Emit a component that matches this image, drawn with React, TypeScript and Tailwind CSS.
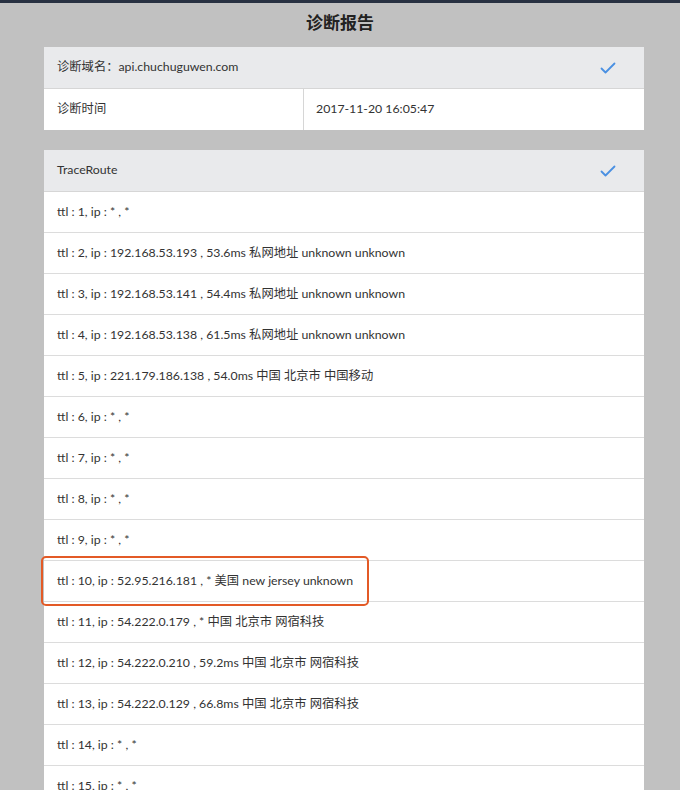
import React from 'react';

const rows = [
  'ttl : 1, ip : * , *',
  'ttl : 2, ip : 192.168.53.193 , 53.6ms 私网地址 unknown unknown',
  'ttl : 3, ip : 192.168.53.141 , 54.4ms 私网地址 unknown unknown',
  'ttl : 4, ip : 192.168.53.138 , 61.5ms 私网地址 unknown unknown',
  'ttl : 5, ip : 221.179.186.138 , 54.0ms 中国 北京市 中国移动',
  'ttl : 6, ip : * , *',
  'ttl : 7, ip : * , *',
  'ttl : 8, ip : * , *',
  'ttl : 9, ip : * , *',
  'ttl : 10, ip : 52.95.216.181 , * 美国 new jersey unknown',
  'ttl : 11, ip : 54.222.0.179 , * 中国 北京市 网宿科技',
  'ttl : 12, ip : 54.222.0.210 , 59.2ms 中国 北京市 网宿科技',
  'ttl : 13, ip : 54.222.0.129 , 66.8ms 中国 北京市 网宿科技',
  'ttl : 14, ip : * , *',
  'ttl : 15, ip : * , *',
];

function Check() {
  return (
    <svg width="16" height="12" viewBox="0 0 16 12" fill="none">
      <path d="M1.5 6.5 L5.5 10.5 L14.5 1.5" stroke="#4a90e2" strokeWidth="1.8" strokeLinecap="round" strokeLinejoin="round" />
    </svg>
  );
}

export default function App() {
  return (
    <div className="w-[680px] h-[790px] overflow-hidden bg-[#c1c1c1] text-[#333] text-[12.3px]" style={{ fontFamily: 'Lato, "Noto Sans CJK SC", sans-serif' }}>
      <div className="h-[3px] bg-[#283142]" />
      <h1 className="h-[44px] flex items-start justify-center pt-[7px] text-[17px] leading-[24px] font-bold text-[#222]" style={{ fontFamily: '"Noto Sans CJK SC", sans-serif' }}>
        诊断报告
      </h1>

      {/* domain card */}
      <div className="ml-[44px] mr-[36px] bg-white">
        <div className="h-[42px] flex items-center justify-between pl-[13px] pr-[28px] bg-[#e9eaec] border-b border-[#d6d6d6]">
          <span>诊断域名：api.chuchuguwen.com</span>
          <Check />
        </div>
        <div className="h-[41px] flex">
          <div className="w-[260px] flex items-center pl-[13px] border-r border-[#d6d6d6]">诊断时间</div>
          <div className="flex-1 flex items-center pl-[12px]">2017-11-20 16:05:47</div>
        </div>
      </div>

      {/* traceroute card */}
      <div className="ml-[44px] mr-[36px] mt-[20px] bg-white">
        <div className="h-[42px] flex items-center justify-between pl-[13px] pr-[28px] bg-[#e9eaec] border-b border-[#d6d6d6]">
          <span>TraceRoute</span>
          <Check />
        </div>
        {rows.map((r, i) => (
          <div key={i} className="relative h-[41px] flex items-center pl-[13px] border-b border-[#dcdcdc]">
            <span>{r}</span>
            {i === 9 && (
              <div className="absolute left-[-3px] top-[-5px] w-[328px] h-[50px] rounded-[5px] border-2 border-[#e35a26]" />
            )}
          </div>
        ))}
      </div>
    </div>
  );
}
